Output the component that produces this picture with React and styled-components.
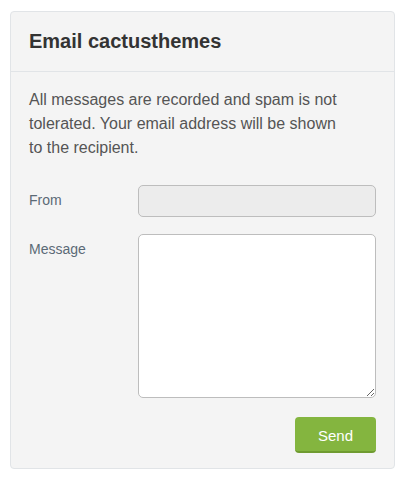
import styled, { createGlobalStyle } from "styled-components";

const Global = createGlobalStyle`
  body {
    margin: 0;
    background: #fff;
    font-family: "Liberation Sans", Arial, sans-serif;
  }
`;

const Page = styled.div`
  padding: 11px 10px 10px 10px;
`;

const Card = styled.div`
  width: 383px;
  background: #f4f4f4;
  border: 1px solid #e1e4e7;
  border-radius: 4px;
`;

const Header = styled.div`
  height: 59px;
  display: flex;
  align-items: center;
  padding: 0 18px;
  border-bottom: 1px solid #e1e4e7;
`;

const Title = styled.h3`
  margin: 0;
  font-size: 20px;
  font-weight: bold;
  color: #333;
`;

const Body = styled.div`
  padding: 16px 18px 15px 18px;
`;

const Intro = styled.p`
  margin: 0 0 25px 0;
  font-size: 16px;
  line-height: 24px;
  color: #555;
`;

const Row = styled.div`
  display: flex;
  align-items: flex-start;
  margin-bottom: ${(p) => p.gap || 17}px;
`;

const Label = styled.label`
  width: 109px;
  flex: none;
  font-size: 14px;
  color: #5b6a76;
  padding-top: ${(p) => p.top || 7}px;
`;

const Input = styled.input`
  box-sizing: border-box;
  width: 238px;
  height: 32px;
  border: 1px solid #bdbdbd;
  border-radius: 5px;
  background: #ececec;
  outline: none;
`;

const TextArea = styled.textarea`
  box-sizing: border-box;
  width: 238px;
  height: 164px;
  border: 1px solid #bdbdbd;
  border-radius: 5px;
  background: #fff;
  outline: none;
  display: block;
`;

const Actions = styled.div`
  display: flex;
  justify-content: flex-end;
`;

const Button = styled.button`
  width: 81px;
  height: 36px;
  border: none;
  border-bottom: 2px solid #6f9b30;
  border-radius: 4px;
  background: #84b53f;
  color: #fff;
  font-family: "Liberation Sans", Arial, sans-serif;
  font-size: 15px;
  padding: 2px 0 0 0;
`;

export default function App() {
  return (
    <Page>
      <Global />
      <Card>
        <Header>
          <Title>Email cactusthemes</Title>
        </Header>
        <Body>
          <Intro>
            All messages are recorded and spam is not tolerated. Your email
            address will be shown
            <br />
            to the recipient.
          </Intro>
          <Row>
            <Label>From</Label>
            <Input type="text" disabled />
          </Row>
          <Row gap={19}>
            <Label>Message</Label>
            <TextArea />
          </Row>
          <Actions>
            <Button>Send</Button>
          </Actions>
        </Body>
      </Card>
    </Page>
  );
}
